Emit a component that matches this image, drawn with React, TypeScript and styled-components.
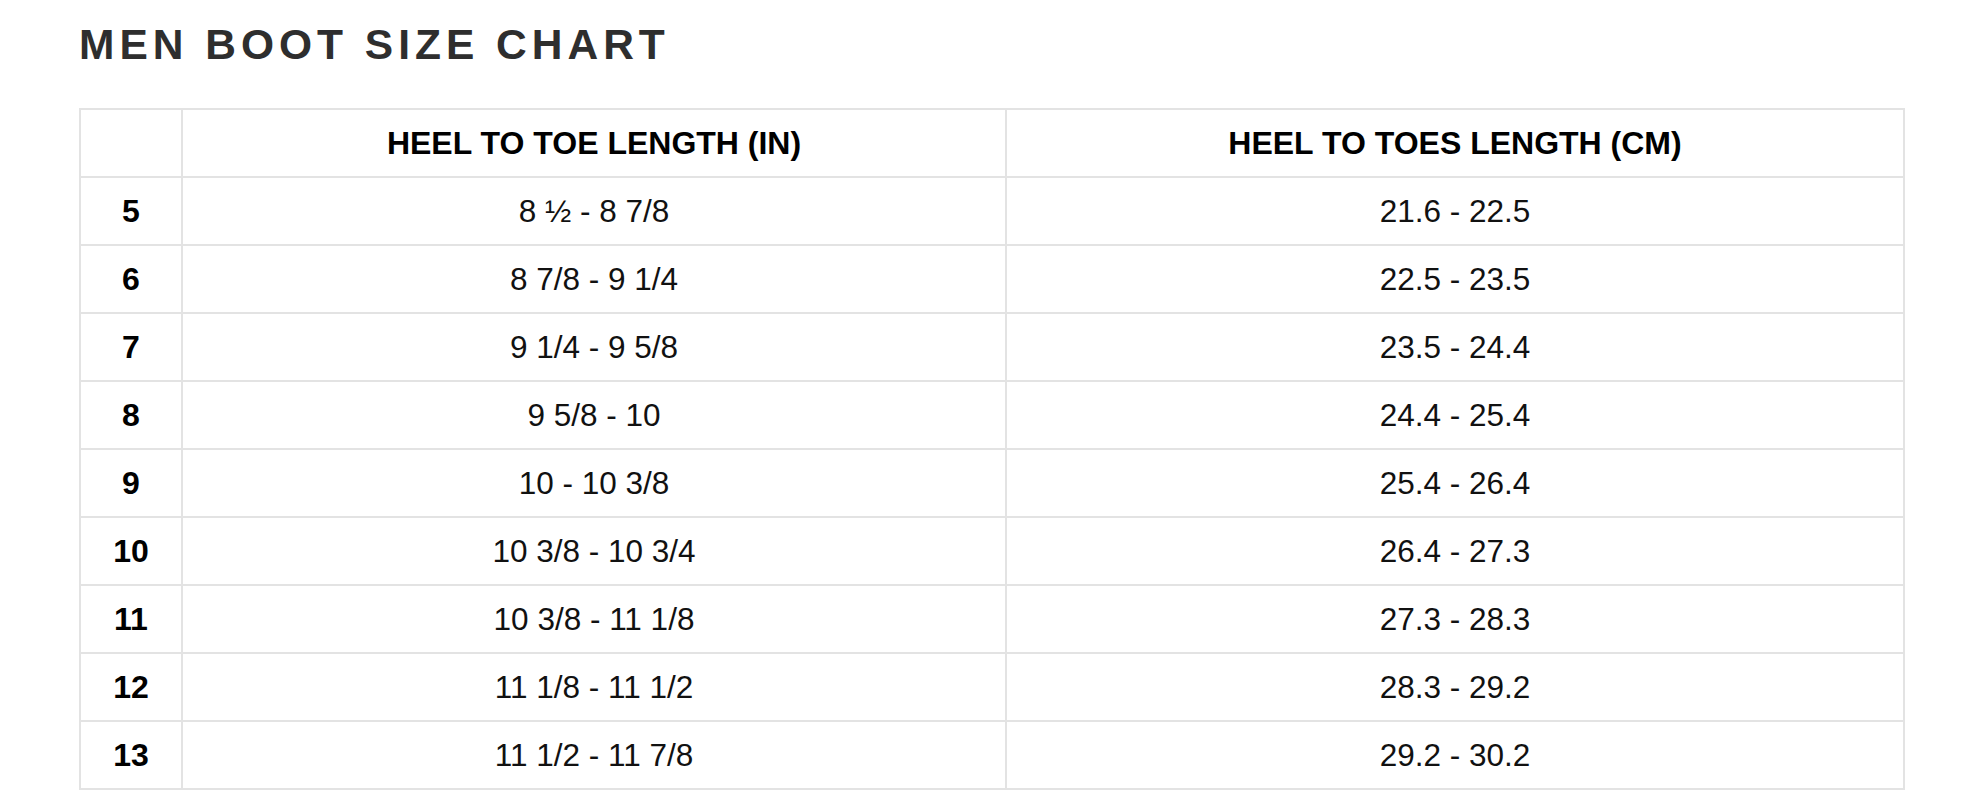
import React from "react";
import styled, { createGlobalStyle } from "styled-components";

const GlobalStyle = createGlobalStyle`
  html, body {
    margin: 0;
    padding: 0;
    background: #ffffff;
  }
  body {
    font-family: "Liberation Sans", Arial, sans-serif;
  }
`;

const Page = styled.main`
  padding: 24px 0 0 79px;
`;

const Title = styled.h1`
  margin: 0 0 42px 0;
  font-family: "Liberation Sans", Arial, sans-serif;
  font-size: 42.5px;
  line-height: 42px;
  font-weight: 700;
  letter-spacing: 5px;
  color: #2e2e2e;
`;

const Table = styled.table`
  width: 1824px;
  border-collapse: collapse;
  table-layout: fixed;
  border: 2px solid #e3e3e3;
`;

const Col = styled.col<{ $w: number }>`
  width: ${(p) => p.$w}px;
`;

const HeadCell = styled.th`
  height: 66px;
  padding: 0;
  border: 2px solid #e3e3e3;
  font-family: "Liberation Sans", Arial, sans-serif;
  font-size: 32px;
  font-weight: 700;
  color: #000;
  text-align: center;
  vertical-align: middle;
`;

const SizeCell = styled.th`
  height: 66px;
  padding: 0;
  border: 2px solid #e3e3e3;
  font-family: "Liberation Sans", Arial, sans-serif;
  font-size: 32px;
  font-weight: 700;
  color: #000;
  text-align: center;
  vertical-align: middle;
`;

const Cell = styled.td`
  height: 66px;
  padding: 0;
  border: 2px solid #e3e3e3;
  font-family: "Liberation Sans", Arial, sans-serif;
  font-size: 31.5px;
  font-weight: 400;
  color: #111;
  text-align: center;
  vertical-align: middle;
`;

const rows: [string, string, string][] = [
  ["5", "8 ½ - 8 7/8", "21.6 - 22.5"],
  ["6", "8 7/8 - 9 1/4", "22.5 - 23.5"],
  ["7", "9 1/4 - 9 5/8", "23.5 - 24.4"],
  ["8", "9 5/8 - 10", "24.4 - 25.4"],
  ["9", "10 - 10 3/8", "25.4 - 26.4"],
  ["10", "10 3/8 - 10 3/4", "26.4 - 27.3"],
  ["11", "10 3/8 - 11 1/8", "27.3 - 28.3"],
  ["12", "11 1/8 - 11 1/2", "28.3 - 29.2"],
  ["13", "11 1/2 - 11 7/8", "29.2 - 30.2"],
];

export default function App() {
  return (
    <>
      <GlobalStyle />
      <Page>
        <Title>MEN BOOT SIZE CHART</Title>
        <Table>
          <colgroup>
            <Col $w={102} />
            <Col $w={824} />
            <Col $w={898} />
          </colgroup>
          <thead>
            <tr>
              <HeadCell></HeadCell>
              <HeadCell>HEEL TO TOE LENGTH (IN)</HeadCell>
              <HeadCell>HEEL TO TOES LENGTH (CM)</HeadCell>
            </tr>
          </thead>
          <tbody>
            {rows.map(([size, inch, cm]) => (
              <tr key={size}>
                <SizeCell scope="row">{size}</SizeCell>
                <Cell>{inch}</Cell>
                <Cell>{cm}</Cell>
              </tr>
            ))}
          </tbody>
        </Table>
      </Page>
    </>
  );
}
